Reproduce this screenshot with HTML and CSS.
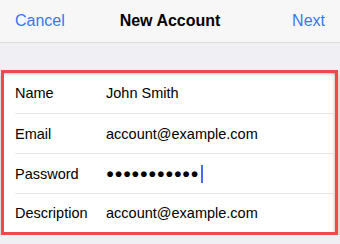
FILE: index.html
```html
<!DOCTYPE html>
<html lang="en">
<head>
    <meta charset="UTF-8">
    <meta name="viewport" content="width=device-width, initial-scale=1.0">
    <title>New Account</title>
    <link rel="stylesheet" href="styles.css">
</head>
<body>
    <div class="navbar">
        <span class="nav-btn">Cancel</span>
        <span class="nav-title">New Account</span>
        <span class="nav-btn nav-right">Next</span>
    </div>

    <div class="form">
        <div class="row">
            <span class="label">Name</span>
            <span class="value">John Smith</span>
        </div>
        <div class="row">
            <span class="label">Email</span>
            <span class="value">account@example.com</span>
        </div>
        <div class="row">
            <span class="label">Password</span>
            <span class="value dots">&#9679;&#9679;&#9679;&#9679;&#9679;&#9679;&#9679;&#9679;&#9679;&#9679;&#9679;<span class="cursor"></span></span>
        </div>
        <div class="row">
            <span class="label">Description</span>
            <span class="value">account@example.com</span>
        </div>
    </div>
</body>
</html>
```

FILE: styles.css
```css
body {
    margin: 0;
    background-color: #efeff4;
    font-family: "Liberation Sans", Arial, sans-serif;
    color: #000;
}

.navbar {
    height: 42px;
    display: grid;
    grid-template-columns: 1fr auto 1fr;
    align-items: center;
    padding: 0 15px;
    background-color: #f7f7f7;
    border-bottom: 1px solid #dcdcdf;
}

.nav-btn {
    font-size: 16px;
    color: #3478f6;
}

.nav-right {
    text-align: right;
}

.nav-title {
    font-size: 16px;
    font-weight: bold;
}

.form {
    margin: 27px 2px 0 1px;
    border: 3px solid #f24848;
    background-color: #fff;
    box-shadow: 0 4px 4px rgba(0, 0, 0, 0.2), inset 0 3px 3px -2px rgba(0, 0, 0, 0.25), inset -3px 0 3px -2px rgba(0, 0, 0, 0.2);
}

.row {
    height: 40px;
    margin-left: 11px;
    display: flex;
    align-items: center;
    font-size: 14.5px;
}

.row + .row {
    height: 39px;
    border-top: 1px solid #e6e6e8;
}

.row:last-child {
    height: 37px;
    padding-bottom: 1px;
}

.label {
    width: 91px;
    flex-shrink: 0;
}

.dots {
    display: flex;
    align-items: center;
    font-size: 13.5px;
    letter-spacing: 0.3px;
}

.cursor {
    display: inline-block;
    width: 2px;
    height: 18px;
    margin-left: 2px;
    background-color: #3f6ff0;
}
```
